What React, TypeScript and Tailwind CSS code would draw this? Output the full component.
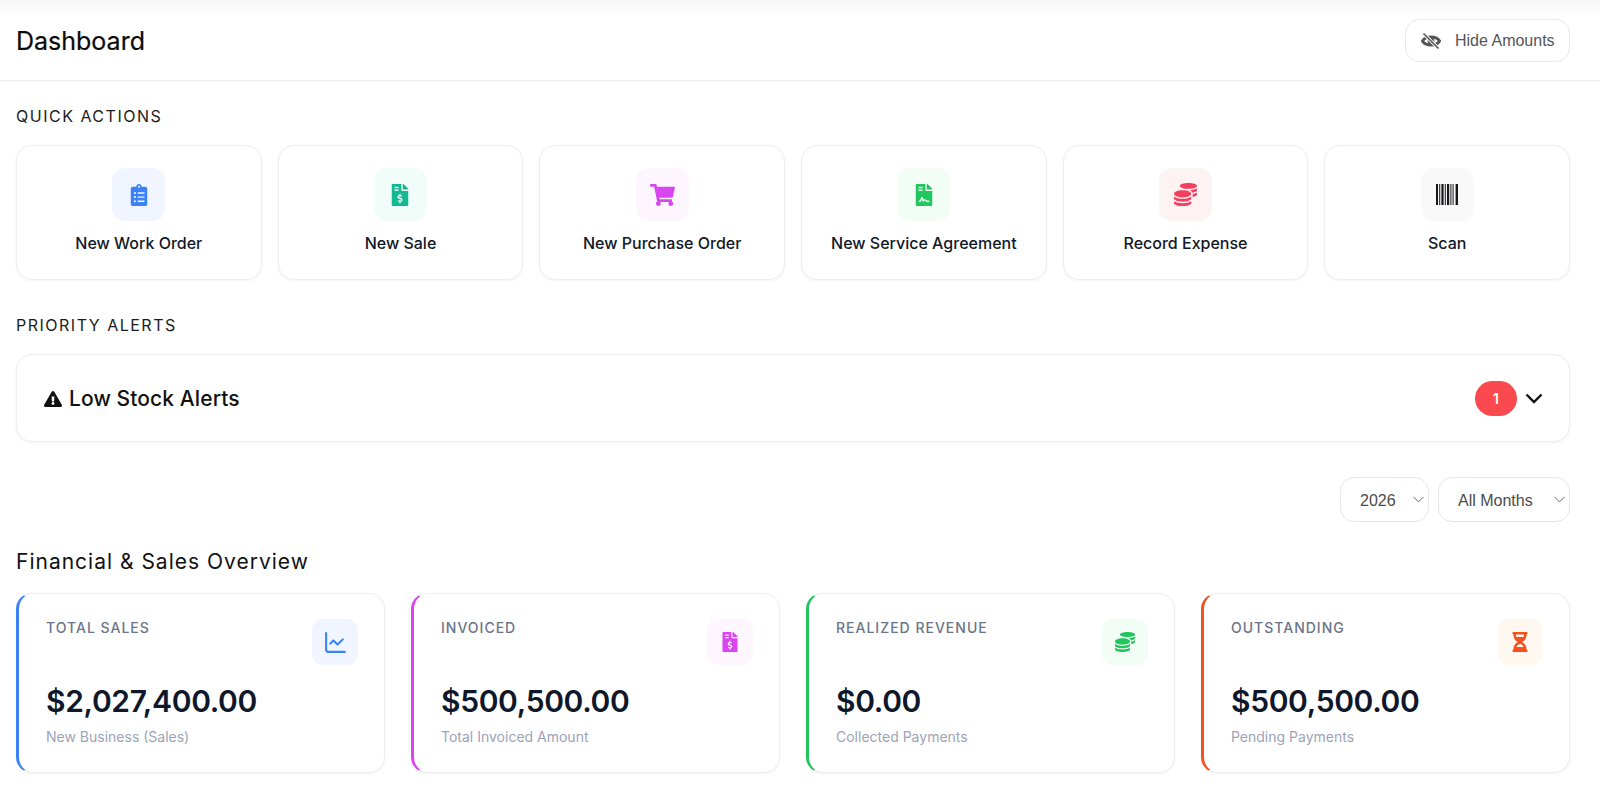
import React from 'react';
import { ChartLine, ChevronDown } from 'lucide-react';
import {
  FaClipboardList,
  FaFileInvoiceDollar,
  FaShoppingCart,
  FaFileContract,
  FaCoins,
  FaExclamationTriangle,
  FaHourglassHalf,
} from 'react-icons/fa';

const font = 'font-["Inter","Noto_Sans",sans-serif]';

function BarcodeIcon() {
  return (
    <svg width="22" height="21" viewBox="0 0 22 21" fill="currentColor">
      <rect x="0" y="0" width="2" height="21" />
      <rect x="3.2" y="0" width="1" height="21" />
      <rect x="5.4" y="0" width="2.2" height="21" />
      <rect x="8.8" y="0" width="1" height="21" />
      <rect x="11" y="0" width="2.2" height="21" />
      <rect x="14.4" y="0" width="1" height="21" />
      <rect x="16.6" y="0" width="1" height="21" />
      <rect x="19.6" y="0" width="2.4" height="21" />
    </svg>
  );
}

function EyeOffIcon() {
  return (
    <svg width="20" height="18" viewBox="0 0 20 18" fill="none" className="text-[#555]">
      <path d="M1.5 9C4.5 3.6 15.5 3.6 18.5 9C15.5 14.4 4.5 14.4 1.5 9Z" stroke="currentColor" strokeWidth="3" />
      <circle cx="10" cy="9" r="3.4" fill="currentColor" />
      <path d="M2.5 1.5L17.5 16.5" stroke="#fff" strokeWidth="3.2" />
      <path d="M2.5 1.5L17.5 16.5" stroke="currentColor" strokeWidth="1.6" />
    </svg>
  );
}

const actions = [
  { label: 'New Work Order', icon: <FaClipboardList size={22} />, box: 'bg-[#f1f5ff]', color: 'text-[#3b82f6]' },
  { label: 'New Sale', icon: <FaFileInvoiceDollar size={22} />, box: 'bg-[#f0fdf9]', color: 'text-[#14b892]' },
  { label: 'New Purchase Order', icon: <FaShoppingCart size={22} className="w-[25px]" />, box: 'bg-[#fdf6ff]', color: 'text-[#d946ef]' },
  { label: 'New Service Agreement', icon: <FaFileContract size={22} />, box: 'bg-[#f1fdf5]', color: 'text-[#22c55e]' },
  { label: 'Record Expense', icon: <FaCoins size={23} />, box: 'bg-[#fef3f3]', color: 'text-[#f43f5e]' },
  { label: 'Scan', icon: <BarcodeIcon />, box: 'bg-[#f9f9f9]', color: 'text-[#18181b]' },
];

const stats = [
  { title: 'TOTAL SALES', value: '$2,027,400.00', sub: 'New Business (Sales)', border: 'border-l-[#3b82f6]', box: 'bg-[#f1f5ff]', color: 'text-[#3b82f6]', icon: <ChartLine size={25} /> },
  { title: 'INVOICED', value: '$500,500.00', sub: 'Total Invoiced Amount', border: 'border-l-[#d946ef]', box: 'bg-[#fdf6ff]', color: 'text-[#d946ef]', icon: <FaFileInvoiceDollar size={20} /> },
  { title: 'REALIZED REVENUE', value: '$0.00', sub: 'Collected Payments', border: 'border-l-[#22c55e]', box: 'bg-[#f1fdf5]', color: 'text-[#22c55e]', icon: <FaCoins size={20} /> },
  { title: 'OUTSTANDING', value: '$500,500.00', sub: 'Pending Payments', border: 'border-l-[#f4511e]', box: 'bg-[#fff8f0]', color: 'text-[#f4511e]', icon: <FaHourglassHalf size={20} /> },
];

function FilterSelect({ label, width }: { label: string; width: string }) {
  return (
    <div className={`flex items-center justify-between h-[45px] pl-[19px] rounded-[14px] border border-[#e5e7eb] bg-white text-[#4b4b4b] text-[16px] font-['Liberation_Sans',sans-serif] ${width}`}>
      <span className="pt-[2px]">{label}</span>
      <ChevronDown size={19} strokeWidth={1.25} className="text-[#666]" />
    </div>
  );
}

export default function App() {
  return (
    <div className={`${font} bg-white min-h-[801px] text-[#0f172a]`}>
      <header className="h-[81px] flex items-center justify-between pl-4 pr-[30px] bg-linear-to-b from-[#f6f6f6] to-white to-[22%] border-b border-[#eceef0] shadow-[0_1px_2px_rgba(0,0,0,0.03)]">
        <h1 className="pt-[3px] text-[25px] font-normal text-[#0b0b0b] [-webkit-text-stroke:0.2px_#0b0b0b]">Dashboard</h1>
        <button className="flex items-center gap-[14px] h-[43px] w-[165px] pl-[15px] pt-[1px] rounded-[14px] border border-[#e7e8ea] bg-white text-[#555] text-[16px] font-['Liberation_Sans',sans-serif]">
          <EyeOffIcon />
          Hide Amounts
        </button>
      </header>

      <main className="pl-4 pr-[30px]">
        <h2 className="mt-[25px] text-[16px] leading-5 tracking-[1.5px] text-[#1c1c1c]">QUICK ACTIONS</h2>
        <div className="mt-[19px] grid grid-cols-6 gap-4">
          {actions.map(({ label, icon, box, color }) => (
            <div key={label} className="h-[135px] flex flex-col items-center pt-[22px] rounded-[16px] border border-[#eeeef0] bg-white shadow-[0_1px_3px_rgba(0,0,0,0.05)]">
              <div className={`w-[53px] h-[53px] rounded-[13px] flex items-center justify-center ${box} ${color}`}>{icon}</div>
              <div className="mt-[12px] text-[16px] leading-5 font-medium text-[#111827]">{label}</div>
            </div>
          ))}
        </div>

        <h2 className="mt-[35px] text-[16px] leading-5 tracking-[1.5px] text-[#1c1c1c]">PRIORITY ALERTS</h2>
        <div className="mt-[19px] h-[88px] flex items-center justify-between pl-[27px] pr-[26px] rounded-[16px] border border-[#eeeef0] bg-white shadow-[0_1px_3px_rgba(0,0,0,0.05)]">
          <div className="flex items-center gap-[7px] pt-[1px] text-[21px] font-medium tracking-[0.1px] text-[#111]">
            <FaExclamationTriangle size={18} className="text-[#111]" />
            Low Stock Alerts
          </div>
          <div className="flex items-center gap-[8px]">
            <span className="w-[42px] h-[35px] rounded-full bg-[#fb4a4f] text-white text-[14px] font-semibold flex items-center justify-center">1</span>
            <svg width="18" height="11" viewBox="0 0 18 11" fill="none" className="text-[#111]">
              <path d="M1.5 1.5L9 9L16.5 1.5" stroke="currentColor" strokeWidth="2.4" />
            </svg>
          </div>
        </div>

        <div className="mt-[35px] flex justify-end gap-[9px]">
          <FilterSelect label="2026" width="w-[89px]" />
          <FilterSelect label="All Months" width="w-[132px]" />
        </div>

        <h2 className="mt-[26px] text-[21px] leading-7 tracking-[1px] text-[#111]">Financial &amp; Sales Overview</h2>
        <div className="mt-[17px] grid grid-cols-4 gap-[26px]">
          {stats.map(({ title, value, sub, border, box, color, icon }) => (
            <div key={title} className={`h-[180px] rounded-[16px] border border-[#eeeef0] border-l-[3px] bg-white pl-[27px] pr-[26px] pt-[25px] shadow-[0_1px_3px_rgba(0,0,0,0.05)] ${border}`}>
              <div className="flex items-start justify-between">
                <div className="mt-[1px] text-[14px] leading-4 font-medium tracking-[1px] text-[#6b7488]">{title}</div>
                <div className={`w-[46px] h-[46px] rounded-[11px] flex items-center justify-center ${box} ${color}`}>{icon}</div>
              </div>
              <div className="mt-[18px] text-[30px] leading-[36px] font-semibold tracking-[-0.35px] text-[#0f172a]">{value}</div>
              <div className="mt-[8px] text-[14px] leading-5 text-[#9ca3b8]">{sub}</div>
            </div>
          ))}
        </div>
      </main>
    </div>
  );
}
